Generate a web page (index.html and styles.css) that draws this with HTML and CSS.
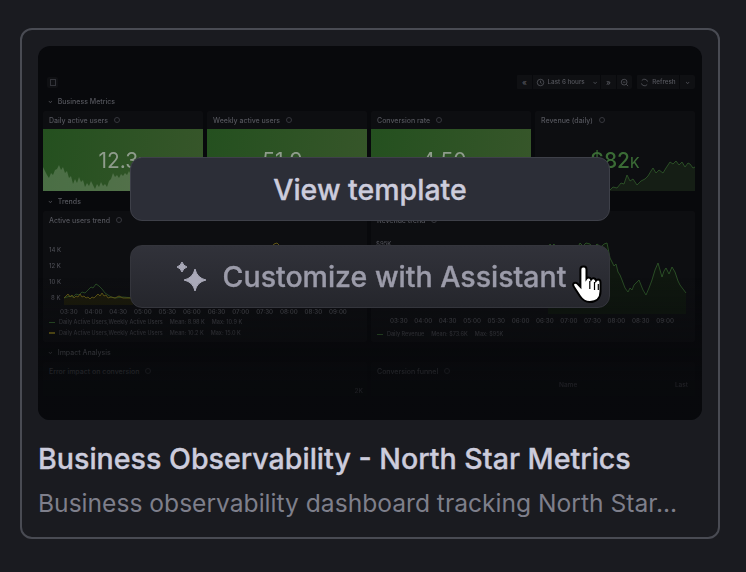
FILE: index.html
```html
<!DOCTYPE html>
<html lang="en">
<head>
    <meta charset="UTF-8">
    <meta name="viewport" content="width=device-width, initial-scale=1.0">
    <title>Template card</title>
    <link rel="stylesheet" href="styles.css">
</head>
<body>
    <article class="card">
        <div class="preview">
            <div class="dash">
                <div class="toolbar">
                    <span class="toggle"><i></i></span>
                    <div class="time-group">
                        <span class="tool-cell tool-square">«</span>
                        <span class="tool-cell time-range">
                            <svg class="mini-icon" viewBox="0 0 10 10"><circle cx="5" cy="5" r="3.6"/><path d="M5 3v2.2l1.4.8"/></svg>
                            Last 6 hours <i class="caret">⌄</i>
                        </span>
                        <span class="tool-cell tool-square">»</span>
                        <span class="tool-cell tool-square">
                            <svg class="mini-icon" viewBox="0 0 10 10"><circle cx="4.6" cy="4.6" r="3.2"/><path d="M3.2 4.6h2.8M7 7l2 2"/></svg>
                        </span>
                    </div>
                    <div class="time-group">
                        <span class="tool-cell refresh">
                            <svg class="mini-icon" viewBox="0 0 10 10"><path d="M8.4 4A3.6 3.6 0 0 0 2 2.8M1.6 6A3.6 3.6 0 0 0 8 7.2"/></svg>
                            Refresh
                        </span>
                        <span class="tool-cell tool-square"><i class="caret">⌄</i></span>
                    </div>
                </div>

                <div class="section-title"><i class="caret">⌄</i>Business Metrics</div>
                <div class="stat-row">
                    <section class="panel">
                        <div class="panel-title">Daily active users <span class="info"></span></div>
                        <div class="stat stat-green">
                            <span class="stat-value">12.3<small>K</small></span>
                            <svg class="spark" viewBox="0 0 160 62" preserveAspectRatio="none">
                                <polygon class="spark-light" points="0,38 2,42 4,46 6,49 8,44 10,46 12,41 14,40 16,36 18,41 20,38 22,44 24,42 26,49 28,47 30,55 32,50 34,54 36,48 38,53 40,51 42,58 44,54 46,57 48,52 50,56 52,60 54,55 56,58 58,53 60,57 62,55 64,58 66,52 68,50 70,44 72,48 74,46 76,49 78,45 80,47 82,44 84,46 86,42 90,50 95,46 100,52 105,42 110,50 115,47 120,52 125,40 130,48 135,50 140,44 145,46 150,52 155,47 160,50 160,62 0,62"/>
                            </svg>
                        </div>
                    </section>
                    <section class="panel">
                        <div class="panel-title">Weekly active users <span class="info"></span></div>
                        <div class="stat stat-green">
                            <span class="stat-value">51.9<small>K</small></span>
                        </div>
                    </section>
                    <section class="panel">
                        <div class="panel-title">Conversion rate <span class="info"></span></div>
                        <div class="stat stat-green">
                            <span class="stat-value">4.50<small>%</small></span>
                        </div>
                    </section>
                    <section class="panel">
                        <div class="panel-title">Revenue (daily) <span class="info"></span></div>
                        <div class="stat">
                            <span class="stat-value stat-value-green">$82<small>K</small></span>
                            <svg class="spark" viewBox="0 0 160 62" preserveAspectRatio="none">
                                <polygon class="spark-dark" points="0,60 30,58 50,60 75,61 78,58 82,59 86,54 89,55 92,46 95,52 98,50 102,56 106,52 110,50 113,47 116,42 118,39 121,44 124,41 128,44 131,39 135,33 138,35 141,32 144,36 147,33 150,38 153,34 155,35 158,39 160,38 160,62 0,62"/>
                                <polyline class="line-green" points="75,61 78,58 82,59 86,54 89,55 92,46 95,52 98,50 102,56 106,52 110,50 113,47 116,42 118,39 121,44 124,41 128,44 131,39 135,33 138,35 141,32 144,36 147,33 150,38 153,34 155,35 158,39 160,38"/>
                            </svg>
                        </div>
                    </section>
                </div>

                <div class="section-title"><i class="caret">⌄</i>Trends</div>
                <div class="chart-row">
                    <section class="panel chart-panel">
                        <div class="panel-title">Active users trend <span class="info"></span></div>
                        <svg class="chart chart-short" viewBox="0 0 323 70">
                            <g class="axis">
                                <text x="6" y="14">14 K</text>
                                <text x="6" y="30">12 K</text>
                                <text x="6" y="46">10 K</text>
                                <text x="8" y="62">8 K</text>
                            </g>
                            <polygon class="fill-yellow" points="21,60 23,58 25,56 27,59 29,57 31,60 33,58 35,59 37,56 39,59 41,58 43,60 45,59 47,61 49,59 51,60 53,58 55,56 57,58 59,55 61,58 63,57 65,60 68,59 72,60 76,58 80,60 90,60 90,67 21,67"/>
                            <polyline class="line-green" points="21,60 24,59 27,58 30,59 33,56 36,57 39,54 42,55 45,52 48,49 50,50 53,46 56,48 59,51 62,55 65,57 68,59 72,60 80,59 90,60"/>
                            <polyline class="line-yellow" points="21,60 23,58 25,56 27,59 29,57 31,60 33,58 35,59 37,56 39,59 41,58 43,60 45,59 47,61 49,59 51,60 53,58 55,56 57,58 59,55 61,58 63,57 65,60 68,59 72,60 76,58 80,60 90,60"/>
                            <polyline class="line-yellow" points="228,10 231,6 234,5 237,8 240,12"/>
                        </svg>
                        <div class="x-axis">
                            <span>03:30</span><span>04:00</span><span>04:30</span><span>05:00</span><span>05:30</span><span>06:00</span><span>06:30</span><span>07:00</span><span>07:30</span><span>08:00</span><span>08:30</span><span>09:00</span>
                        </div>
                        <div class="legend"><i class="swatch swatch-green"></i>Daily Active Users,Weekly Active Users <b>Mean: 8.98 K</b> <b>Max: 10.9 K</b></div>
                        <div class="legend"><i class="swatch swatch-yellow"></i>Daily Active Users,Weekly Active Users <b>Mean: 10.2 K</b> <b>Max: 15.0 K</b></div>
                    </section>
                    <section class="panel chart-panel">
                        <div class="panel-title">Revenue trend <span class="info"></span></div>
                        <svg class="chart" viewBox="0 0 323 76">
                            <g class="axis">
                                <text x="5" y="8">$95K</text>
                            </g>
                            <polygon class="fill-green" points="177,9 179,6 181,8 183,6 185,9 190,12 200,14 207,9 209,5 212,8 215,5 219,6 222,10 226,6 230,9 233,6 236,5 239,20 241,24 243,28 245,26 247,34 249,37 251,42 254,50 257,54 259,50 261,52 263,47 266,44 268,42 272,52 275,57 278,50 281,42 284,32 287,25 289,32 291,39 293,33 295,30 298,36 301,29 304,34 307,43 309,47 312,51 315,55 315,77 177,77"/>
                            <polyline class="line-green" points="177,9 179,6 181,8 183,6 185,9 190,12 200,14 207,9 209,5 212,8 215,5 219,6 222,10 226,6 230,9 233,6 236,5 239,20 241,24 243,28 245,26 247,34 249,37 251,42 254,50 257,54 259,50 261,52 263,47 266,44 268,42 272,52 275,57 278,50 281,42 284,32 287,25 289,32 291,39 293,33 295,30 298,36 301,29 304,34 307,43 309,47 312,51 315,55"/>
                        </svg>
                        <div class="x-axis x-axis-wide">
                            <span>03:30</span><span>04:00</span><span>04:30</span><span>05:00</span><span>05:30</span><span>06:00</span><span>06:30</span><span>07:00</span><span>07:30</span><span>08:00</span><span>08:30</span><span>09:00</span>
                        </div>
                        <div class="legend"><i class="swatch swatch-green"></i>Daily Revenue <b>Mean: $73.6K</b> <b>Max: $95K</b></div>
                    </section>
                </div>

                <div class="section-title"><i class="caret">⌄</i>Impact Analysis</div>
                <div class="chart-row">
                    <section class="panel impact-panel">
                        <div class="panel-title">Error impact on conversion <span class="info"></span></div>
                        <div class="impact-foot">2K</div>
                    </section>
                    <section class="panel impact-panel">
                        <div class="panel-title">Conversion funnel <span class="info"></span></div>
                        <div class="impact-head"><span>Name</span><span>Last</span></div>
                    </section>
                </div>
            </div>

            <div class="actions">
                <button class="action-btn view-btn">View template</button>
                <button class="action-btn assistant-btn">
                    <svg class="sparkle" viewBox="0 0 34 34">
                        <path d="M8 2 Q9.200 5.800 13 7 Q9.200 8.200 8 12 Q6.800 8.200 3 7 Q6.800 5.800 8 2 Z"/>
                        <path d="M21 9 Q23 18 32 20 Q23 22 21 31 Q19 22 10 20 Q19 18 21 9 Z"/>
                    </svg>
                    Customize with Assistant
                </button>
                <svg class="hand" viewBox="0 0 32 42">
                    <path d="M11 3.500c-1.600 0-2.600 1.200-2.600 2.900v17.400l-3-3.200c-1.300-1.300-3-1.200-3.800-.2-.8 1-.5 2.300.4 3.600l6 9.300c2.300 3.600 5 5.700 9.800 5.700 6.500 0 10.700-4 10.700-10.400v-9.300c0-1.700-1-2.800-2.400-2.800-.9 0-1.600.4-2.100 1.100-.3-1.500-1.300-2.400-2.600-2.400-1 0-1.800.5-2.300 1.300-.4-1.300-1.300-2-2.500-2-.9 0-1.700.4-2.100 1v-9.100c0-1.700-1.100-2.900-2.500-2.900z"/>
                    <path class="hand-lines" d="M17.800 18v8M22.500 19v8M26.300 21v6"/>
                </svg>
            </div>
        </div>

        <h3 class="card-title">Business Observability - North Star Metrics</h3>
        <p class="card-desc">Business observability dashboard tracking North Star...</p>
    </article>
</body>
</html>
```

FILE: styles.css
```css
body {
    margin: 0;
    background: #1a1b20;
    font-family: Inter, "Liberation Sans", sans-serif;
}

.card {
    box-sizing: border-box;
    width: 700px;
    height: 511px;
    margin: 28px 0 0 20px;
    padding: 16px;
    border: 2px solid #494b53;
    border-radius: 12px;
}

/* Dashboard thumbnail */
.preview {
    position: relative;
    height: 374px;
    width: 664px;
    background: #08090c;
    border-radius: 12px;
    overflow: hidden;
}

.preview::after {
    content: "";
    position: absolute;
    inset: 0;
    background: linear-gradient(to bottom, rgba(8, 9, 12, 0) 62%, rgba(8, 9, 12, 0.75) 90%);
}

.dash {
    box-sizing: border-box;
    height: 350px;
    padding: 27px 7px 0 5px;
    overflow: hidden;
    color: #5c5d65;
    font-size: 7px;
    font-weight: 500;
    filter: blur(0.5px);
}

.toolbar {
    display: flex;
    align-items: center;
    gap: 4px;
    height: 18px;
    padding-left: 4px;
}

.toggle {
    display: flex;
    align-items: center;
    justify-content: center;
    width: 11px;
    height: 11px;
    background: #0f1013;
    border-radius: 2px;
    margin-right: auto;
}

.toggle i {
    width: 4px;
    height: 5px;
    border: 1px solid #33343a;
}

.time-group {
    display: flex;
    align-items: center;
    height: 14px;
    background: #0f1013;
    border-radius: 2px;
}

.tool-cell {
    display: flex;
    align-items: center;
    justify-content: center;
    gap: 3px;
    height: 14px;
    border-left: 1px solid #08090c;
    color: #55565d;
    font-size: 6.300px;
    white-space: nowrap;
}

.tool-square {
    width: 15px;
    font-size: 8px;
}

.time-range {
    width: 67px;
}

.refresh {
    width: 42px;
}

.mini-icon {
    width: 9px;
    height: 9px;
    fill: none;
    stroke: #5c5d65;
    stroke-width: 0.8;
}

.caret {
    font-style: normal;
    font-size: 6px;
    line-height: 6px;
}

.time-range .caret {
    margin-left: 5px;
}

.section-title {
    display: flex;
    align-items: center;
    gap: 5px;
    height: 20px;
    padding-left: 5px;
    color: #55565d;
}

.stat-row {
    display: grid;
    grid-template-columns: repeat(4, 160px);
    gap: 4px;
}

.chart-row {
    display: grid;
    grid-template-columns: repeat(2, 324px);
    gap: 4px;
}

.panel {
    background: #0d0e11;
    border-radius: 2px;
}

.panel-title {
    display: flex;
    align-items: center;
    gap: 6px;
    height: 18px;
    padding-left: 6px;
    color: #54555c;
    white-space: nowrap;
}

.info {
    width: 4px;
    height: 4px;
    border: 1px solid #36373d;
    border-radius: 50%;
}

.stat {
    position: relative;
    display: flex;
    align-items: center;
    justify-content: center;
    height: 62px;
    overflow: hidden;
}

.stat-green {
    background: linear-gradient(100deg, #24501f, #37562a);
}

.stat-value {
    position: relative;
    z-index: 1;
    font-size: 21px;
    font-weight: 400;
    color: #8f9c8c;
}

.stat-value small {
    font-size: 14px;
}

.stat-value-green {
    color: #3a6b35;
    font-weight: 500;
}

.spark {
    position: absolute;
    inset: 0;
    width: 100%;
    height: 100%;
}

.spark-light {
    fill: rgba(200, 210, 195, 0.23);
}

.spark-dark {
    fill: #151e15;
}

.chart-panel {
    height: 131px;
}

.impact-panel {
    position: relative;
    height: 60px;
    background: #0b0c0f;
}

.impact-foot {
    position: absolute;
    top: 25px;
    right: 4px;
    font-size: 6.500px;
    line-height: 8px;
}

.impact-head {
    display: flex;
    justify-content: space-between;
    padding: 1px 7px 0 188px;
    font-size: 6.500px;
    color: #63646c;
}

.chart {
    display: block;
    width: 323px;
    height: 76px;
    margin-top: 9px;
}

.chart-short {
    height: 70px;
}

.axis text {
    fill: #4b4c53;
    font-size: 6px;
}

.line-green,
.line-yellow {
    fill: none;
    stroke-width: 0.8;
}

.line-green {
    stroke: #315c2b;
}

.line-yellow {
    stroke: #756818;
}

.fill-yellow {
    fill: #1c1b0c;
}

.fill-green {
    fill: #0f170f;
}

.x-axis {
    display: flex;
    justify-content: space-between;
    height: 9px;
    padding: 0 20px 0 17px;
    font-size: 6.200px;
    color: #47484e;
}

.x-axis-wide {
    height: 12px;
    padding: 3px 21px 0 19px;
}

.legend {
    display: flex;
    align-items: center;
    gap: 4px;
    height: 10.500px;
    padding-left: 6px;
    font-size: 5.500px;
    color: #414248;
    white-space: nowrap;
}

.legend b {
    font-weight: 500;
    margin-left: 3px;
}

.swatch {
    width: 6px;
    height: 1.500px;
}

.swatch-green {
    background: #315c2b;
}

.swatch-yellow {
    background: #756818;
}

/* Buttons on top of the thumbnail */
.actions {
    position: absolute;
    z-index: 2;
    top: 111px;
    left: 92px;
    width: 480px;
    display: flex;
    flex-direction: column;
    gap: 24px;
}

.action-btn {
    display: flex;
    align-items: center;
    justify-content: center;
    box-sizing: border-box;
    width: 480px;
    height: 64px;
    padding: 0;
    border-radius: 12px;
    font-family: inherit;
    font-size: 28.500px;
    font-weight: 500;
    -webkit-text-stroke: 0.35px;
}

.view-btn {
    background: #2c2e37;
    border: 1.500px solid #3e4049;
    color: #ccccdc;
}

.assistant-btn {
    gap: 15px;
    height: 63px;
    background: linear-gradient(to bottom, #31323a, #25262c);
    border: 1px solid #34353c;
    color: #9b9ba9;
}

.sparkle {
    width: 34px;
    height: 34px;
    fill: #a9a9b8;
    stroke: #a9a9b8;
    stroke-width: 1;
    stroke-linejoin: round;
}

.hand {
    position: absolute;
    top: 106px;
    left: 442px;
    width: 32px;
    height: 42px;
    fill: #fff;
    stroke: #000;
    stroke-width: 2;
}

.hand-lines {
    fill: none;
    stroke-width: 1.200;
}

/* Text under the thumbnail */
.card-title {
    margin: 21px 0 0;
    font-size: 28.600px;
    line-height: 36px;
    font-weight: 500;
    color: #ccccdc;
    white-space: nowrap;
    -webkit-text-stroke: 0.35px;
}

.card-desc {
    margin: 10px 0 0;
    font-size: 24.600px;
    line-height: 32px;
    color: #7e7f8b;
    white-space: nowrap;
}
```
